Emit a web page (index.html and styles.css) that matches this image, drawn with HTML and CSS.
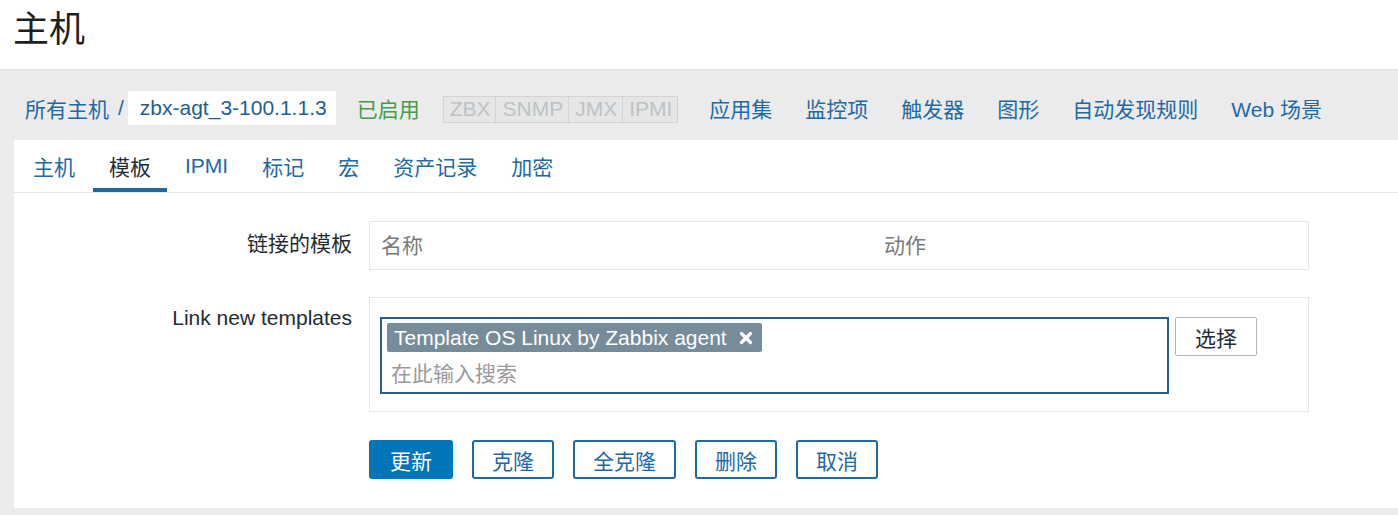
FILE: index.html
```html
<!DOCTYPE html>
<html lang="zh">
<head>
<meta charset="utf-8">
<title>主机</title>
<link rel="stylesheet" href="styles.css">
</head>
<body>
<header class="page-head">
  <h1 class="page-title">主机</h1>
</header>
<nav class="host-nav">
  <a class="link crumb">所有主机</a>
  <span class="sep">/</span>
  <span class="host-name">zbx-agt_3-100.1.1.3</span>
  <span class="status-on">已启用</span>
  <span class="avail">
    <span class="avail-cell">ZBX</span><span class="avail-cell">SNMP</span><span class="avail-cell">JMX</span><span class="avail-cell">IPMI</span>
  </span>
  <a class="link nav-link">应用集</a>
  <a class="link nav-link">监控项</a>
  <a class="link nav-link">触发器</a>
  <a class="link nav-link">图形</a>
  <a class="link nav-link">自动发现规则</a>
  <a class="link nav-link">Web 场景</a>
</nav>
<main class="content">
  <ul class="tabs">
    <li class="tab">主机</li>
    <li class="tab active">模板</li>
    <li class="tab">IPMI</li>
    <li class="tab">标记</li>
    <li class="tab">宏</li>
    <li class="tab">资产记录</li>
    <li class="tab">加密</li>
  </ul>
  <form class="form">
    <div class="row">
      <div class="label">链接的模板</div>
      <div class="field box table-box">
        <div class="th">名称</div>
        <div class="th">动作</div>
      </div>
    </div>
    <div class="row">
      <div class="label label-latin">Link new templates</div>
      <div class="field box link-box">
        <div class="multiselect">
          <span class="tag">Template OS Linux by Zabbix agent
            <svg class="tag-x" width="14" height="14" viewBox="0 0 14 14"><path d="M2.5 2.5 L11.5 11.5 M11.5 2.5 L2.5 11.5" stroke="#fff" stroke-width="3.2" stroke-linecap="round"/></svg>
          </span>
          <span class="placeholder">在此输入搜索</span>
        </div>
        <button type="button" class="btn-select">选择</button>
      </div>
    </div>
    <div class="row">
      <div class="label"></div>
      <div class="buttons">
        <button type="button" class="btn primary">更新</button>
        <button type="button" class="btn">克隆</button>
        <button type="button" class="btn">全克隆</button>
        <button type="button" class="btn">删除</button>
        <button type="button" class="btn">取消</button>
      </div>
    </div>
  </form>
</main>
</body>
</html>
```
FILE: styles.css
```css
* { box-sizing: border-box; }
html, body {
  margin: 0;
  padding: 0;
}
body {
  background: #ebebeb;
  font-family: "Liberation Sans", Arial, "Noto Sans CJK SC", sans-serif;
  font-size: 21px;
  color: #1f2c33;
  width: 1398px;
  height: 515px;
  overflow: hidden;
}
.page-head {
  background: #fff;
  height: 70px;
  padding: 0 14px;
  display: flex;
  align-items: center;
  border-bottom: 1px solid #e2e2e2;
}
.page-title {
  margin: 0;
  font-size: 36px;
  font-weight: normal;
  color: #1f1f1f;
  line-height: 1;
  position: relative;
  top: -5px;
  left: -1px;
}
.host-nav {
  height: 70px;
  display: flex;
  align-items: center;
  padding: 6px 0 0 25px;
  background: #ebebeb;
}
.link { color: #1d6aa5; text-decoration: none; }
.sep { color: #1d6aa5; margin: 0 4px 0 9px; }
.host-name {
  background: #fff;
  color: #1d5f93;
  height: 34px;
  display: flex;
  align-items: center;
  padding: 0 9px 0 12px;
}
.status-on { color: #429e47; margin-left: 21px; }
.avail {
  display: flex;
  margin-left: 23px;
  border: 1px solid #d0d4d6;
  background: #e6e6e6;
  height: 27px;
  position: relative;
  top: 1px;
}
.avail-cell {
  color: #bcc3c7;
  padding: 0 5px 0 6px;
  display: flex;
  align-items: center;
  border-right: 1px solid #d0d4d6;
}
.avail-cell:last-child { border-right: none; }
.nav-link { margin-left: 31px; }
.nav-link + .nav-link { margin-left: 33px; }
.content {
  margin-left: 14px;
  background: #fff;
  height: 368px;
}
.tabs {
  list-style: none;
  margin: 0;
  padding: 0 0 0 3px;
  display: flex;
  height: 53px;
  border-bottom: 1px solid #e6e6e6;
}
.tab {
  padding: 0 16px;
  margin-right: 2px;
  display: flex;
  align-items: center;
  color: #1d6aa5;
  border-bottom: 4px solid transparent;
  padding-top: 4px;
}
.tab.active {
  color: #1f2c33;
  border-bottom-color: #1f6a9a;
}
.form {
  padding-top: 28px;
  display: flex;
  flex-direction: column;
  gap: 27px;
}
.row {
  display: flex;
  align-items: flex-start;
}
.label {
  width: 355px;
  text-align: right;
  padding-right: 17px;
  padding-top: 6px;
  flex: none;
}
.label-latin { padding-top: 9px; }
.box {
  width: 940px;
  border: 1px solid #e6e6e6;
}
.table-box {
  height: 49px;
  display: grid;
  grid-template-columns: 503px 1fr;
  align-items: center;
  padding-left: 11px;
  padding-bottom: 3px;
}
.th { color: #7a7a7a; }
.link-box {
  height: 115px;
  display: flex;
  align-items: flex-start;
  padding: 19px 0 0 10px;
}
.multiselect {
  width: 789px;
  height: 77px;
  border: 2px solid #2a5d84;
  padding: 4px 5px;
  display: flex;
  flex-direction: column;
  align-items: flex-start;
}
.tag {
  background: #768d99;
  color: #fff;
  height: 29px;
  border-radius: 2px;
  padding: 0 9px 0 7px;
  display: flex;
  align-items: center;
  gap: 12px;
}
.tag-x { flex: none; }
.placeholder {
  color: #9a9a9a;
  margin-top: 5px;
  padding-left: 4px;
}
.btn-select {
  margin-left: 6px;
  width: 82px;
  height: 39px;
  background: #fff;
  border: 1px solid #b5b5b5;
  border-radius: 2px;
  color: #1f2c33;
  font: inherit;
}
.buttons {
  display: flex;
  gap: 19px;
  padding-top: 1px;
}
.btn {
  height: 39px;
  padding: 0 18px;
  background: #fff;
  border: 2px solid #1d6aa5;
  border-radius: 3px;
  color: #1d6aa5;
  font: inherit;
}
.btn.primary {
  background: #0274b8;
  border-color: #0274b8;
  color: #fff;
  padding: 0 19px;
}
```
